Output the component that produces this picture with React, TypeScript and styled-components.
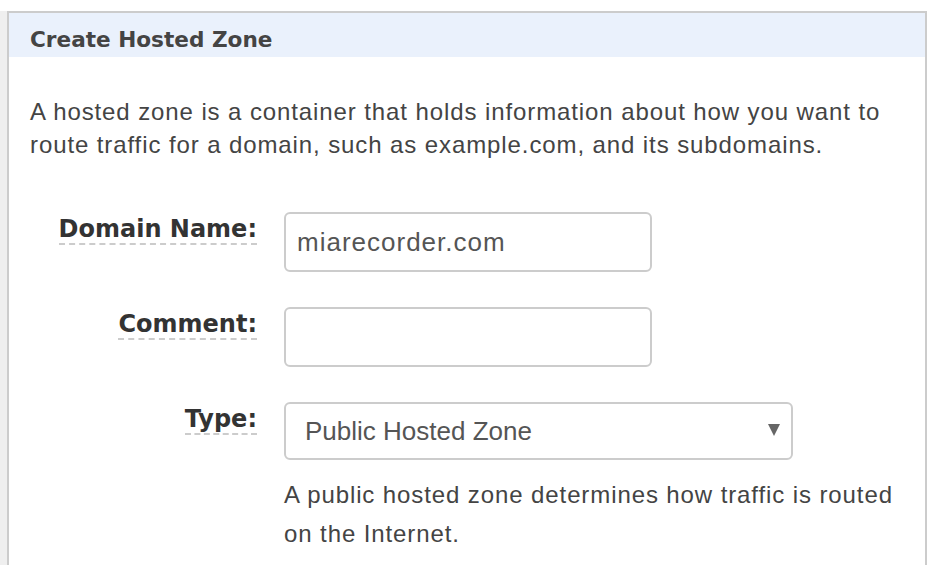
import React from "react";
import styled, { createGlobalStyle } from "styled-components";

const Global = createGlobalStyle`
  html, body { margin: 0; padding: 0; background: #fff; }
  body { width: 937px; height: 565px; overflow: hidden; }
`;

const Page = styled.div`
  display: flex;
  align-items: stretch;
  padding-top: 11px;
  height: 554px;
`;

const SideStrip = styled.div`
  width: 7px;
  background: #efefef;
  flex-shrink: 0;
`;

const Panel = styled.section`
  width: 916px;
  border: 2px solid #cccccc;
  border-bottom: none;
  background: #fff;
`;

const Header = styled.header`
  box-sizing: border-box;
  height: 44px;
  background: #eaf1fc;
  padding: 14px 0 0 21px;
  font-family: "DejaVu Sans", Verdana, sans-serif;
  font-weight: bold;
  font-size: 21.6px;
  line-height: 26px;
  color: #444;
`;

const Body = styled.div`
  padding: 38px 21px 0 21px;
  font-family: "Liberation Sans", Arial, sans-serif;
  color: #444;
`;

const Intro = styled.p`
  margin: 0 0 51px;
  font-size: 24px;
  letter-spacing: 0.9px;
  line-height: 33px;
  white-space: nowrap;
`;

const Form = styled.div`
  display: grid;
  grid-template-columns: 248px 1fr;
  column-gap: 27px;
  row-gap: 35px;
  margin-left: -21px;
`;

const LabelCell = styled.div`
  display: flex;
  justify-content: flex-end;
  align-items: flex-start;
  padding-top: 3px;
`;

const Label = styled.span`
  font-family: "DejaVu Sans", Verdana, sans-serif;
  font-weight: bold;
  font-size: 24px;
  color: #333;
  line-height: 28px;
  border-bottom: 2px dashed #cccccc;
`;

const FieldCell = styled.div`
  display: flex;
  flex-direction: column;
`;

const TextInput = styled.div<{ $w: number }>`
  box-sizing: border-box;
  width: ${(p) => p.$w}px;
  height: 60px;
  border: 2px solid #cccccc;
  border-radius: 6px;
  display: flex;
  align-items: center;
  padding: 0 11px;
  font-size: 26px;
  letter-spacing: 1px;
  color: #555;
`;

const Select = styled.div`
  box-sizing: border-box;
  width: 509px;
  height: 58px;
  border: 2px solid #cccccc;
  border-radius: 6px;
  display: flex;
  align-items: center;
  justify-content: space-between;
  padding: 0 11px 0 19px;
  font-size: 26px;
  color: #555;
`;

const Caret = styled.svg`
  width: 12px;
  height: 12px;
  margin-top: -2px;
`;

const Help = styled.p`
  margin: 15px 0 0;
  font-size: 24px;
  letter-spacing: 0.9px;
  line-height: 39px;
  color: #444;
  white-space: nowrap;
`;

export default function App() {
  return (
    <>
      <Global />
      <Page>
        <SideStrip />
        <Panel>
          <Header>Create Hosted Zone</Header>
          <Body>
            <Intro>
              A hosted zone is a container that holds information about how you want to
              <br />
              route traffic for a domain, such as example.com, and its subdomains.
            </Intro>
            <Form>
              <LabelCell>
                <Label>Domain Name:</Label>
              </LabelCell>
              <FieldCell>
                <TextInput $w={368}>miarecorder.com</TextInput>
              </FieldCell>
              <LabelCell>
                <Label>Comment:</Label>
              </LabelCell>
              <FieldCell>
                <TextInput $w={368} />
              </FieldCell>
              <LabelCell>
                <Label>Type:</Label>
              </LabelCell>
              <FieldCell>
                <Select>
                  <span>Public Hosted Zone</span>
                  <Caret viewBox="0 0 12 12">
                    <path d="M0 0 H12 L6 12 Z" fill="#666" />
                  </Caret>
                </Select>
                <Help>
                  A public hosted zone determines how traffic is routed
                  <br />
                  on the Internet.
                </Help>
              </FieldCell>
            </Form>
          </Body>
        </Panel>
      </Page>
    </>
  );
}
